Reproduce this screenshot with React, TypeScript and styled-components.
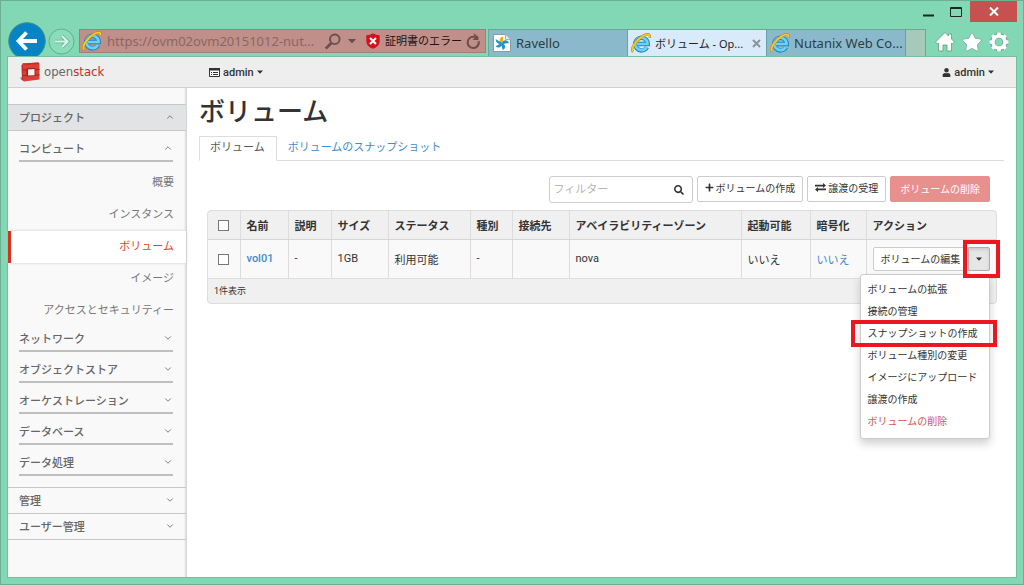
import React from "react";
import styled, { createGlobalStyle } from "styled-components";
import { FaUser, FaPlus, FaSearch, FaStar } from "react-icons/fa";
import { ChevronDown, ChevronUp } from "lucide-react";

const GlobalStyle = createGlobalStyle`
  *, *::before, *::after { box-sizing: border-box; }
  body { margin: 0; background: #82d8b4; }
  button, input { font: inherit; color: inherit; }
  button { cursor: pointer; }
  a { text-decoration: none; color: inherit; }
`;

const appFont = `Roboto, "Noto Sans CJK JP", sans-serif`;
const chromeFont = `"Noto Sans", "Noto Sans CJK JP", sans-serif`;

/* ---------- browser window ---------- */

const Window = styled.div`
  display: flex;
  flex-direction: column;
  min-height: 100vh;
  border: 1px solid #6cb093;
  padding: 0 6px 6px;
  background: #82d8b4;
  font-family: ${chromeFont};
  font-size: 13px;
`;

const TitleBar = styled.div`
  display: flex;
  justify-content: flex-end;
  height: 28px;
`;

const WindowButton = styled.button<{ $close?: boolean }>`
  display: flex;
  align-items: center;
  justify-content: center;
  width: ${(p) => (p.$close ? 47 : 28)}px;
  height: 21px;
  padding: 0;
  border: 0;
  background: ${(p) => (p.$close ? "#c75050" : "transparent")};
`;

const NavRow = styled.div`
  display: flex;
  align-items: flex-start;
  height: 27px;
`;

const RoundButton = styled.button<{ $width: number }>`
  display: flex;
  align-items: center;
  justify-content: center;
  flex: none;
  width: ${(p) => p.$width}px;
  height: 24px;
  padding: 0;
  border: 0;
  background: none;
  overflow: visible;
  svg { flex: none; }
`;

const AddressBar = styled.div`
  display: flex;
  align-items: center;
  flex: 1;
  min-width: 0;
  height: 24px;
  margin: 0 2px 0 3px;
  padding: 0 4px 0 2px;
  border: 1px solid #9f8078;
  background: #c08f89;
  color: #3a2a29;
`;

const Url = styled.input`
  flex: 1;
  min-width: 0;
  height: 20px;
  margin: 0 4px 0 5px;
  padding: 0;
  border: 0;
  outline: 0;
  background: none;
  color: #8a6763;
`;

const CertButton = styled.button`
  display: flex;
  align-items: center;
  gap: 5px;
  margin: 0 4px 0 9px;
  padding: 0;
  border: 0;
  background: none;
  color: #1e1413;
  font-size: 11px;
  line-height: 20px;
  white-space: nowrap;
`;

const BareButton = styled.button`
  display: flex;
  align-items: center;
  padding: 0;
  border: 0;
  background: none;
  color: #6a504c;
`;

const TabStrip = styled.div`
  display: flex;
  height: 27px;
  border: 1px solid #6aa892;
  border-bottom: 0;
`;

const BrowserTab = styled.div<{ $active?: boolean }>`
  display: flex;
  align-items: center;
  gap: 4px;
  width: 139px;
  padding: 0 5px 0 3px;
  border-right: 1px solid #6a9fa6;
  background: ${(p) => (p.$active ? "#d9eafa" : "#8bb9cc")};
  color: ${(p) => (p.$active ? "#222" : "#2d3d44")};
  font-size: ${(p) => (p.$active ? 11 : 13)}px;
  white-space: nowrap;
  svg { flex: none; }
`;

const TabTitle = styled.span`
  flex: 1;
`;

const NewTab = styled.button`
  width: 19px;
  padding: 0;
  border: 0;
  background: #a5cabc;
`;

const BrowserTools = styled.div`
  display: flex;
  align-items: center;
  gap: 6px;
  height: 26px;
  padding: 0 7px 0 8px;
`;

/* ---------- dashboard ---------- */

const Page = styled.div`
  display: flex;
  flex-direction: column;
  flex: 1;
  border: 1px solid #74bfa0;
  background: #fff;
  font-family: ${appFont};
  font-size: 11px;
  color: #333;
`;

const TopBar = styled.header`
  display: flex;
  align-items: center;
  height: 31px;
  padding: 0 22px 0 12px;
  border-bottom: 1px solid #d0d0d0;
  background: #eee;
`;

const Brand = styled.a`
  display: flex;
  align-items: center;
  gap: 4px;
  width: 189px;
  font-family: "DejaVu Sans Condensed", "DejaVu Sans", sans-serif;
  font-size: 13px;
  line-height: 20px;
  color: #666;
`;

const BrandAccent = styled.span`
  color: #cf2a2a;
`;

const TopMenu = styled.button<{ $end?: boolean }>`
  display: flex;
  align-items: center;
  gap: 3px;
  margin-left: ${(p) => (p.$end ? "auto" : "0")};
  padding: 0;
  border: 0;
  background: none;
  font-weight: 500;
  color: #333;
`;

const Body = styled.div`
  display: flex;
  flex: 1;
`;

const Sidebar = styled.nav`
  flex: none;
  width: 179px;
  padding-top: 16px;
  border-right: 1px solid #d6d6d6;
  background: #f9f9f9;
  box-shadow: inset -2px 0 2px -1px #ddd;
  color: #666;
`;

const PanelHead = styled.button<{ $open?: boolean }>`
  display: flex;
  align-items: center;
  justify-content: space-between;
  width: 100%;
  height: ${(p) => (p.$open ? 27 : 26)}px;
  padding: 0 11px 2px;
  border: 0;
  border-top: 1px solid #c8c8c8;
  border-bottom: ${(p) => (p.$open ? "1px solid #c8c8c8" : "0")};
  background: ${(p) => (p.$open ? "#e2e3e5" : "transparent")};
  font-weight: 500;
`;

const PanelList = styled.div`
  border-bottom: 1px solid #c8c8c8;
`;

const GroupHead = styled.button`
  display: flex;
  align-items: center;
  justify-content: space-between;
  width: 154px;
  height: 27px;
  margin: 4px 11px 0;
  padding: 0;
  border: 0;
  border-bottom: 2px solid #bfbfbf;
  background: none;
  font-weight: 500;
`;

const Groups = styled.div`
  padding-bottom: 11px;
`;

const Links = styled.div`
  padding-top: 5px;
  margin-bottom: -6px;
`;

const SideLink = styled.a<{ $active?: boolean }>`
  display: block;
  height: 32px;
  padding-right: 12px;
  border-left: 3px solid ${(p) => (p.$active ? "#d9301f" : "transparent")};
  background: ${(p) => (p.$active ? "#fff" : "transparent")};
  box-shadow: ${(p) => (p.$active ? "0 0 3px #ccc" : "none")};
  color: ${(p) => (p.$active ? "#dd4432" : "#777")};
  line-height: 32px;
  text-align: right;
`;

const Main = styled.main`
  flex: 1;
  min-width: 0;
  padding: 0 12px;
`;

const Heading = styled.h1`
  margin: 9px 0;
  font-size: 26px;
  line-height: 30px;
  font-weight: 500;
`;

const Tabs = styled.div`
  display: flex;
  height: 25px;
  border-bottom: 1px solid #ddd;
`;

const Tab = styled.a<{ $active?: boolean }>`
  height: 25px;
  padding: 0 11px 0 10px;
  border: 1px solid ${(p) => (p.$active ? "#ddd" : "transparent")};
  border-bottom-color: ${(p) => (p.$active ? "#fff" : "transparent")};
  background: ${(p) => (p.$active ? "#fff" : "transparent")};
  color: ${(p) => (p.$active ? "#555" : "#428bca")};
  line-height: 22px;
`;

const Panel = styled.div`
  padding: 15px 7px 0 8px;
`;

const Toolbar = styled.div`
  display: flex;
  justify-content: flex-end;
  gap: 4px;
  height: 27px;
  margin-bottom: 7px;
  padding-right: 7px;
`;

const Filter = styled.label`
  display: flex;
  align-items: center;
  width: 144px;
  height: 27px;
  padding: 0 8px 0 4px;
  border: 1px solid #ccc;
  border-radius: 3px;
`;

const FilterInput = styled.input`
  flex: 1;
  min-width: 0;
  padding: 0;
  border: 0;
  outline: 0;
  background: none;
  &::placeholder { color: #b5b5b5; opacity: 1; }
`;

const Button = styled.button<{ $danger?: boolean }>`
  display: flex;
  align-items: center;
  justify-content: center;
  gap: 2px;
  height: 26px;
  padding: 0 ${(p) => (p.$danger ? 9 : 7)}px ${(p) => (p.$danger ? 2 : 3)}px;
  border: 1px solid ${(p) => (p.$danger ? "#e68f8c" : "#ccc")};
  border-radius: 2px;
  background: ${(p) => (p.$danger ? "#e8908d" : "#fff")};
  color: ${(p) => (p.$danger ? "#fff" : "#333")};
  font-size: 10px;
  white-space: nowrap;
`;

const TableFrame = styled.div`
  border: 1px solid #ddd;
  border-radius: 4px;
  background: #f0f0f0;
`;

const Table = styled.table`
  width: 100%;
  table-layout: fixed;
  border-collapse: collapse;
`;

const HeadCell = styled.th`
  height: 28px;
  padding: 0 6px;
  border-right: 1px solid #ddd;
  border-bottom: 1px solid #d5d5d5;
  font-weight: 700;
  text-align: left;
  white-space: nowrap;
  &:last-child { border-right: 0; }
`;

const Cell = styled.td`
  height: 39px;
  padding: 0 6px;
  border-right: 1px solid #ddd;
  border-bottom: 1px solid #ddd;
  background: #f9f9f9;
  white-space: nowrap;
  &:last-child { border-right: 0; }
`;

const FootCell = styled.td`
  height: 25px;
  padding: 0 6px;
  font-size: 9px;
`;

const TextLink = styled.a<{ $strong?: boolean }>`
  color: #428bca;
  font-weight: ${(p) => (p.$strong ? 500 : 400)};
`;

const Checkbox = styled.input`
  appearance: none;
  display: block;
  width: 11px;
  height: 11px;
  margin: 2px 0 0 4px;
  border: 1px solid #777;
  background: #fff;
`;

const SplitButton = styled.div`
  position: relative;
  display: flex;
  width: 117px;
  height: 24px;
`;

const EditButton = styled.button`
  flex: 1;
  padding: 0 0 1px 7px;
  border: 1px solid #ccc;
  border-radius: 2px 0 0 2px;
  background: #fff;
  font-size: 10px;
  text-align: left;
`;

const Toggle = styled.button`
  display: flex;
  align-items: center;
  justify-content: center;
  width: 22px;
  padding: 0;
  border: 1px solid #adadad;
  border-radius: 0 2px 2px 0;
  background: #e6e6e6;
  box-shadow: inset 0 2px 3px #ccc;
`;

const Menu = styled.div`
  position: absolute;
  z-index: 1;
  top: 27px;
  right: 0;
  width: 130px;
  padding: 4px 0 5px;
  border: 1px solid #ccc;
  border-radius: 3px;
  background: #fff;
  box-shadow: 0 5px 8px rgba(0, 0, 0, 0.18);
`;

const MenuItem = styled.a<{ $danger?: boolean }>`
  position: relative;
  display: block;
  padding: 0 7px;
  color: ${(p) => (p.$danger ? "#d9534f" : "#333")};
  font-size: 10px;
  line-height: 22px;
`;

const ToggleMark = styled.span`
  position: absolute;
  z-index: 2;
  top: -7px;
  right: -10px;
  width: 37px;
  height: 38px;
  border: 4px solid #ec1620;
  pointer-events: none;
`;

const ItemMark = styled.span`
  position: absolute;
  inset: -3px -8px -2px -10px;
  border: 4px solid #ec1620;
  pointer-events: none;
`;

/* ---------- drawings ---------- */

const IeLogo = () => (
  <svg width="20" height="20" viewBox="0 0 20 20" fill="none" aria-hidden="true">
    <path d="M16 14.2A6.300 6.300 0 1 1 16.800 11H6" stroke="#2387bd" strokeWidth="4.400" />
    <path d="M15.800 14A6.200 6.200 0 1 1 16.600 11H6" stroke="#6fd0f5" strokeWidth="2.600" />
    <path d="M2.200 18.800C-1 16.500 4.500 7.200 11.500 3.100C15.800 .5 19.400 .3 18.700 4.800" stroke="#b98a16" strokeWidth="2.400" />
    <path d="M2.200 18.400C-.6 16.200 4.800 7.300 11.600 3.200C15.600 .9 19 .6 18.400 4.400" stroke="#fbc928" strokeWidth="1.700" />
  </svg>
);

const RavelloLogo = () => (
  <svg width="20" height="20" viewBox="-1 0 20 20" aria-hidden="true">
    <path d="M.5 1.500h12l5 5v12H.5z" fill="#fff" stroke="#8c9ba1" />
    <path d="M12.500 1.500v5h5" fill="#e6eaec" stroke="#a7b0b4" />
    <path d="M9 10.500C5.500 8.500 6 4 10.500 3.500C9.300 6 10.800 8 9 10.500Z" fill="#f3a81c" />
    <path d="M9 10.500C10 6 15 6.500 16 10.500C13.500 9.500 11 12 9 10.500ZM9 10.500C13 11 13 16 9.500 17C9.800 14 7.500 12.500 9 10.500ZM9 10.500C8.500 15 4.500 15.500 2.500 13C5.500 12.500 6.500 10 9 10.500ZM9 10.500C5.500 12 2.500 9.500 2.800 6C5 8.500 7.500 7.500 9 10.500Z" fill="#1f93c4" />
  </svg>
);

const OpenStackLogo = () => (
  <svg width="20" height="20" viewBox="0 0 20 20" aria-hidden="true">
    <path d="M0 15.500L3 15V19L1 17.500z" fill="#8b8b8b" />
    <path d="M1.500 3L4 1.500V19L2 17.500z" fill="#9c211c" />
    <path d="M2.500 1.500L18.500 .5L19.500 2V17.500L4 19.500L2.500 18z" fill="#dc3f35" />
    <path d="M2.500 1.500L18.500 .5L19.500 2L4 3z" fill="#c22e27" />
    <path d="M6.500 6.500L15.500 6V14L6.500 14.500z" fill="#a61e1a" />
    <path d="M8 7.500L14.500 7V13.200L8 13.500z" fill="#f7efed" />
    <path d="M2.500 8H6.500M2.500 13.500H6.500M15.500 7.500H19.500M15.500 13H19.500" stroke="#a5231e" />
  </svg>
);

const BackIcon = () => (
  <svg width="38" height="38" viewBox="0 0 38 38" aria-hidden="true">
    <circle cx="19" cy="19" r="18.300" fill="#0684c6" stroke="#4c8d86" />
    <path d="M29 19H11M18.500 10.500L10.500 19L18.500 27.500" fill="none" stroke="#fff" strokeWidth="3.800" />
  </svg>
);

const ForwardIcon = () => (
  <svg width="27" height="27" viewBox="0 0 27 27" aria-hidden="true">
    <circle cx="13.500" cy="13.500" r="12.500" fill="#8adcba" stroke="#5fae91" />
    <path d="M7 13.500h12M14 8l5.500 5.500L14 19" fill="none" stroke="#5fae91" strokeWidth="3.600" />
    <path d="M7 13.500h12M14 8l5.500 5.500L14 19" fill="none" stroke="#d8f5e9" strokeWidth="2.200" />
  </svg>
);

const ZoomIcon = () => (
  <svg width="16" height="17" viewBox="0 0 16 17" fill="none" stroke="#6a504c" aria-hidden="true">
    <circle cx="9.800" cy="6.300" r="4.800" strokeWidth="1.900" />
    <path d="M6.300 10L.8 15.500" strokeWidth="2.600" />
  </svg>
);

const ShieldIcon = () => (
  <svg width="14" height="16" viewBox="0 0 14 16" aria-hidden="true">
    <path d="M7 .3C9 1.600 11 2.100 13.700 2.200V8C13.700 12 10.500 14.600 7 15.800C3.500 14.600 .3 12 .3 8V2.200C3 2.100 5 1.600 7 .3Z" fill="#d3121d" />
    <path d="M4 5l6 6M10 5l-6 6" stroke="#fff" strokeWidth="2" />
  </svg>
);

const ReloadIcon = () => (
  <svg width="15" height="17" viewBox="0 0 15 17" aria-hidden="true">
    <path d="M9 3.800H7.200A5.600 5.600 0 1 0 12.700 8.200" fill="none" stroke="#6a504c" strokeWidth="2.100" />
    <path d="M7.500 0L12.500 4V7H6.500L9 4.500z" fill="#6a504c" />
  </svg>
);

const HomeIcon = () => (
  <svg width="22" height="22" viewBox="0 0 22 22" aria-hidden="true">
    <path d="M11 1.500L1.500 11L3.500 13L4.500 12V20H9V14H13V20H17.500V12L18.500 13L20.500 11L17.500 8V3H14.500V5Z" fill="#fff" stroke="#5b9d84" strokeWidth=".8" />
  </svg>
);

const GearIcon = () => (
  <svg width="22" height="22" viewBox="0 0 22 22" fill="none" aria-hidden="true">
    {[{ c: "#5b9d84", t: 5, r: 4.6 }, { c: "#fff", t: 3.6, r: 3.4 }].map((l) => (
      <g key={l.c} stroke={l.c}>
        <circle cx="11" cy="11" r="6" strokeWidth={l.r} />
        <path d="M11 1.500v3M11 17.500v3M1.500 11h3M17.500 11h3M4.300 4.300l2 2M15.700 15.700l2 2M4.300 17.700l2-2M15.700 6.300l2-2" strokeWidth={l.t} />
      </g>
    ))}
  </svg>
);

const ListIcon = () => (
  <svg width="11" height="9" viewBox="0 0 11 9" aria-hidden="true">
    <path d="M.5 .5h10v8H.5z" fill="#fff" stroke="#333" />
    <path d="M0 0h11v2.500H0z" fill="#333" />
    <path d="M2 4.500h1M4 4.500h5M2 6.500h1M4 6.500h5" stroke="#333" />
  </svg>
);

const Caret = () => (
  <svg width="6" height="4" viewBox="0 0 6 4" aria-hidden="true">
    <path d="M0 .5h6L3 3.800z" fill="#333" />
  </svg>
);

const TransferIcon = () => (
  <svg width="11" height="9" viewBox="0 0 11 9" fill="#333" aria-hidden="true">
    <path d="M0 1.800h8V0L11 2.600L8 5V3.400H0zM11 7.200H3V9L0 6.500L3 4V5.600H11z" />
  </svg>
);

const headers = ["名前", "説明", "サイズ", "ステータス", "種別", "接続先", "アベイラビリティーゾーン", "起動可能", "暗号化", "アクション"];
const columnWidths = [32, 48, 43, 57, 82, 42, 57, undefined, 69, 56, 130];
const sideLinks = ["概要", "インスタンス", "ボリューム", "イメージ", "アクセスとセキュリティー"];
const groups = ["ネットワーク", "オブジェクトストア", "オーケストレーション", "データベース", "データ処理"];
const menuItems = ["ボリュームの拡張", "接続の管理", "スナップショットの作成", "ボリューム種別の変更", "イメージにアップロード", "譲渡の作成", "ボリュームの削除"];

export default function App() {
  return (
    <Window>
      <GlobalStyle />
      <TitleBar>
        <WindowButton aria-label="最小化">
          <svg width="12" height="12"><path d="M1 9.500h11" stroke="#222" strokeWidth="2" /></svg>
        </WindowButton>
        <WindowButton aria-label="最大化">
          <svg width="12" height="10"><path d="M.5 .5h11v9H.5zM0 1.500h12" fill="none" stroke="#222" /></svg>
        </WindowButton>
        <WindowButton $close aria-label="閉じる">
          <svg width="10" height="9"><path d="M1 .5l8 8M9 .5l-8 8" stroke="#fff" strokeWidth="2" /></svg>
        </WindowButton>
      </TitleBar>
      <NavRow>
        <RoundButton $width={40} aria-label="戻る"><BackIcon /></RoundButton>
        <RoundButton $width={29} aria-label="進む"><ForwardIcon /></RoundButton>
        <AddressBar>
          <IeLogo />
          <Url aria-label="アドレス" defaultValue="https://ovm02ovm20151012-nut..." />
          <BareButton aria-label="検索"><ZoomIcon /></BareButton>
          <BareButton aria-label="履歴">
            <svg width="16" height="5"><path d="M7 0h8l-4 4.500z" fill="#6a504c" /></svg>
          </BareButton>
          <CertButton><ShieldIcon />証明書のエラー</CertButton>
          <BareButton aria-label="更新"><ReloadIcon /></BareButton>
        </AddressBar>
        <TabStrip>
          <BrowserTab><RavelloLogo /><TabTitle>Ravello</TabTitle></BrowserTab>
          <BrowserTab $active>
            <IeLogo />
            <TabTitle>ボリューム - Op...</TabTitle>
            <BareButton aria-label="タブを閉じる">
              <svg width="9" height="9"><path d="M1 1l7 7M8 1l-7 7" stroke="#8a949c" strokeWidth="2" /></svg>
            </BareButton>
          </BrowserTab>
          <BrowserTab><IeLogo /><TabTitle>Nutanix Web Co...</TabTitle></BrowserTab>
          <NewTab aria-label="新しいタブ" />
        </TabStrip>
        <BrowserTools>
          <BareButton aria-label="ホーム"><HomeIcon /></BareButton>
          <BareButton aria-label="お気に入り"><FaStar size={20} color="#fff" stroke="#5b9d84" strokeWidth={18} /></BareButton>
          <BareButton aria-label="ツール"><GearIcon /></BareButton>
        </BrowserTools>
      </NavRow>

      <Page>
        <TopBar>
          <Brand href="#"><OpenStackLogo /><span>open<BrandAccent>stack</BrandAccent></span></Brand>
          <TopMenu><ListIcon />admin<Caret /></TopMenu>
          <TopMenu $end><FaUser size={9} />admin<Caret /></TopMenu>
        </TopBar>
        <Body>
          <Sidebar>
            <PanelHead $open>プロジェクト<ChevronUp size={10} /></PanelHead>
            <Groups>
              <GroupHead>コンピュート<ChevronUp size={10} /></GroupHead>
              <Links>
                {sideLinks.map((label) => (
                  <SideLink key={label} href="#" $active={label === "ボリューム"}>{label}</SideLink>
                ))}
              </Links>
              {groups.map((label) => (
                <GroupHead key={label}>{label}<ChevronDown size={10} /></GroupHead>
              ))}
            </Groups>
            <PanelList>
              <PanelHead>管理<ChevronDown size={10} /></PanelHead>
              <PanelHead>ユーザー管理<ChevronDown size={10} /></PanelHead>
            </PanelList>
          </Sidebar>
          <Main>
            <Heading>ボリューム</Heading>
            <Tabs>
              <Tab href="#" $active>ボリューム</Tab>
              <Tab href="#">ボリュームのスナップショット</Tab>
            </Tabs>
            <Panel>
              <Toolbar>
                <Filter>
                  <FilterInput placeholder="フィルター" aria-label="フィルター" />
                  <FaSearch size={10} />
                </Filter>
                <Button><FaPlus size={9} />ボリュームの作成</Button>
                <Button><TransferIcon />譲渡の受理</Button>
                <Button $danger>ボリュームの削除</Button>
              </Toolbar>
              <TableFrame>
                <Table>
                  <colgroup>
                    {columnWidths.map((w, i) => <col key={i} width={w} />)}
                  </colgroup>
                  <thead>
                    <tr>
                      <HeadCell><Checkbox type="checkbox" aria-label="すべて選択" /></HeadCell>
                      {headers.map((h) => <HeadCell key={h}>{h}</HeadCell>)}
                    </tr>
                  </thead>
                  <tbody>
                    <tr>
                      <Cell><Checkbox type="checkbox" aria-label="vol01" /></Cell>
                      <Cell><TextLink href="#" $strong>vol01</TextLink></Cell>
                      <Cell>-</Cell>
                      <Cell>1GB</Cell>
                      <Cell>利用可能</Cell>
                      <Cell>-</Cell>
                      <Cell />
                      <Cell>nova</Cell>
                      <Cell>いいえ</Cell>
                      <Cell><TextLink href="#">いいえ</TextLink></Cell>
                      <Cell>
                        <SplitButton>
                          <EditButton>ボリュームの編集</EditButton>
                          <Toggle aria-label="その他のアクション"><Caret /></Toggle>
                          <ToggleMark />
                          <Menu>
                            {menuItems.map((item, i) => (
                              <MenuItem key={item} href="#" $danger={i === menuItems.length - 1}>
                                {item}
                                {i === 2 && <ItemMark />}
                              </MenuItem>
                            ))}
                          </Menu>
                        </SplitButton>
                      </Cell>
                    </tr>
                  </tbody>
                  <tfoot>
                    <tr><FootCell colSpan={11}>1件表示</FootCell></tr>
                  </tfoot>
                </Table>
              </TableFrame>
            </Panel>
          </Main>
        </Body>
      </Page>
    </Window>
  );
}
